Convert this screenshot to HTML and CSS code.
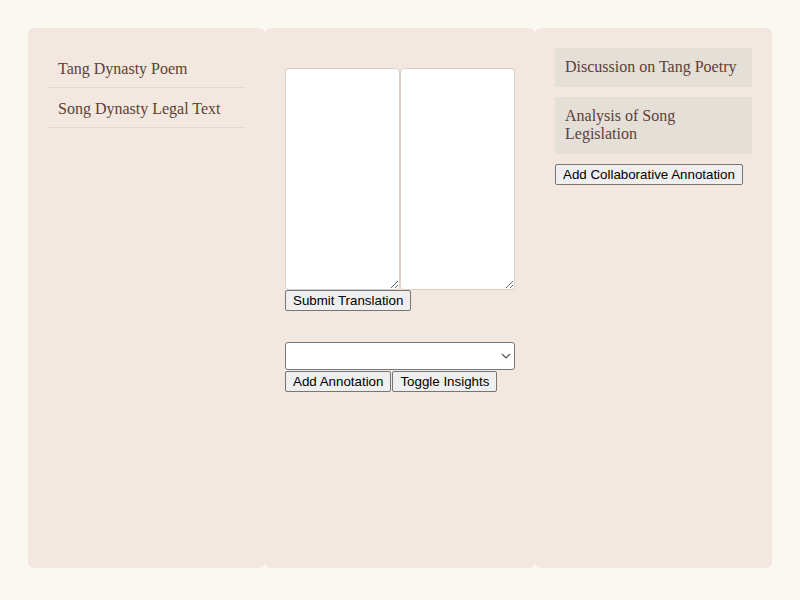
FILE: index.html
```html
<!DOCTYPE html>
<html>
<head>
<meta charset="utf-8">
<link rel="stylesheet" href="styles.css">
</head>
<body>
<div class="app">
  <div class="panel">
    <ul class="doc-list">
      <li class="doc-item">Tang Dynasty Poem</li>
      <li class="doc-item">Song Dynasty Legal Text</li>
    </ul>
  </div>
  <div class="panel">
    <div class="editor">
      <div class="texts">
        <textarea class="text-box"></textarea>
        <textarea class="text-box"></textarea>
      </div>
      <button class="btn">Submit Translation</button>
    </div>
    <div class="annot">
      <div class="select-wrap">
        <select class="annot-select"></select>
        <svg class="chevron" width="10" height="6" viewBox="0 0 10 6"><path d="M1 1 L5 5 L9 1" fill="none" stroke="#555" stroke-width="1.2"/></svg>
      </div>
      <div class="btn-row">
        <button class="btn">Add Annotation</button>
        <button class="btn">Toggle Insights</button>
      </div>
    </div>
  </div>
  <div class="panel">
    <div class="disc">Discussion on Tang Poetry</div>
    <div class="disc">Analysis of Song Legislation</div>
    <button class="btn">Add Collaborative Annotation</button>
  </div>
</div>
</body>
</html>
```
FILE: styles.css
```css
html, body {
  background: #fbf7f1;
}
body {
  margin: 8px;
  font-family: "Liberation Serif", "Times New Roman", serif;
  color: #5d4037;
}
.app {
  display: flex;
  margin: 20px;
  height: 90vh;
}
.panel {
  flex: 1;
  background: #f2e8df;
  border-radius: 6px;
  padding: 20px;
}
.doc-list {
  list-style: none;
  margin: 0;
  padding: 0;
}
.doc-item {
  padding: 11px 10px 9px;
  border-bottom: 1px solid #e4d9d1;
  font-size: 16px;
  line-height: 19px;
}
.editor {
  margin-top: 20px;
}
.texts {
  display: flex;
}
.text-box {
  width: 115px;
  height: 222px;
  box-sizing: border-box;
  border: 1px solid #dccfc6;
  border-radius: 4px;
  background: #fff;
  margin: 0;
  padding: 10px;
}
.btn {
  font-family: "Liberation Sans", Arial, sans-serif;
  font-size: 13.33px;
  color: #000;
  background: #efefef;
  border: 1px solid #767676;
  border-radius: 2px;
  padding: 1px 7px;
  height: 21px;
  margin: 0;
}
.annot {
  margin-top: 31px;
}
.select-wrap {
  position: relative;
  width: 230px;
}
.annot-select {
  display: block;
  width: 230px;
  height: 28px;
  margin: 0;
  background: #fff;
  border: 1px solid #767676;
  border-radius: 3px;
  appearance: none;
  -webkit-appearance: none;
}
.chevron {
  position: absolute;
  right: 4px;
  top: 11px;
  pointer-events: none;
}
.btn-row {
  display: flex;
  gap: 1px;
  margin-top: 1px;
}
.disc {
  background: #e4dfd7;
  padding: 10px;
  margin-bottom: 10px;
  font-size: 16px;
  line-height: 18.5px;
}
```
